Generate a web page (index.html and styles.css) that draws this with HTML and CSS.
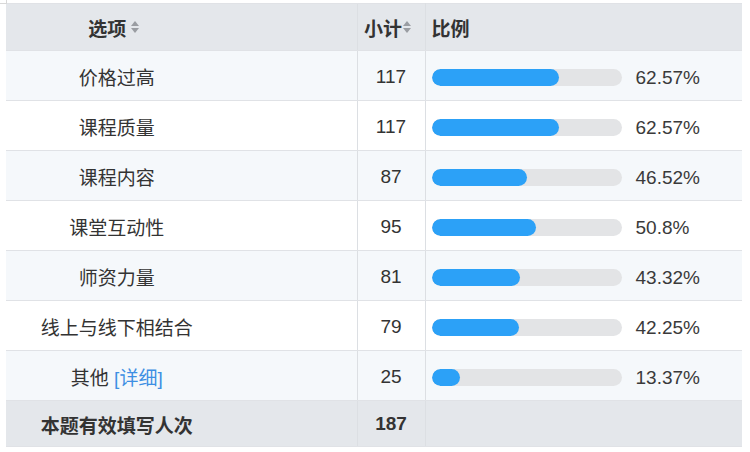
FILE: index.html
```html
<!DOCTYPE html>
<html lang="zh-CN">
<head>
<meta charset="utf-8">
<link rel="stylesheet" href="styles.css">
</head>
<body>
<div class="frame">
<table class="stat">
  <thead>
    <tr>
      <th class="c-opt"><span class="sortable">选项<i class="sort sort-opt"></i></span></th>
      <th class="c-num"><span class="sortable">小计<i class="sort sort-num"></i></span></th>
      <th class="c-pct">比例</th>
    </tr>
  </thead>
  <tbody>
    <tr class="odd"><td class="c-opt">价格过高</td><td class="c-num">117</td><td class="c-pct"><div class="pct"><div class="track"><div class="fill" style="width:127px"></div></div><span class="val">62.57%</span></div></td></tr>
    <tr><td class="c-opt">课程质量</td><td class="c-num">117</td><td class="c-pct"><div class="pct"><div class="track"><div class="fill" style="width:127px"></div></div><span class="val">62.57%</span></div></td></tr>
    <tr class="odd"><td class="c-opt">课程内容</td><td class="c-num">87</td><td class="c-pct"><div class="pct"><div class="track"><div class="fill" style="width:95px"></div></div><span class="val">46.52%</span></div></td></tr>
    <tr><td class="c-opt">课堂互动性</td><td class="c-num">95</td><td class="c-pct"><div class="pct"><div class="track"><div class="fill" style="width:104px"></div></div><span class="val">50.8%</span></div></td></tr>
    <tr class="odd"><td class="c-opt">师资力量</td><td class="c-num">81</td><td class="c-pct"><div class="pct"><div class="track"><div class="fill" style="width:88px"></div></div><span class="val">43.32%</span></div></td></tr>
    <tr><td class="c-opt">线上与线下相结合</td><td class="c-num">79</td><td class="c-pct"><div class="pct"><div class="track"><div class="fill" style="width:87px"></div></div><span class="val">42.25%</span></div></td></tr>
    <tr class="odd"><td class="c-opt">其他 <a class="detail" href="#">[详细]</a></td><td class="c-num">25</td><td class="c-pct"><div class="pct"><div class="track"><div class="fill" style="width:28px"></div></div><span class="val">13.37%</span></div></td></tr>
  </tbody>
  <tfoot>
    <tr><td class="c-opt">本题有效填写人次</td><td class="c-num">187</td><td class="c-pct"></td></tr>
  </tfoot>
</table>
</div>
</body>
</html>
```
FILE: styles.css
```css
html, body {
  margin: 0;
  padding: 0;
  background: #ffffff;
}
body {
  font-family: "Liberation Sans", "Noto Sans CJK SC", sans-serif;
  font-size: 19px;
  color: #333333;
}
.frame {
  position: relative;
  padding: 3px 0 0 6px;
  width: 736px;
}
.frame::before {
  content: "";
  position: absolute;
  left: 0;
  top: 0;
  width: 7px;
  height: 4px;
  border-right: 1px solid #d8d8d8;
  border-bottom: 1px solid #d8d8d8;
  box-sizing: border-box;
}
.stat {
  width: 736px;
  border-collapse: collapse;
  table-layout: fixed;
}
.stat th, .stat td {
  padding: 0;
  border-top: 1px solid #e0e2e6;
  border-bottom: 1px solid #e0e2e6;
  vertical-align: middle;
}
.stat .c-opt { width: 351px; text-align: center; padding-right: 129px; box-sizing: border-box; }
.stat .c-num { width: 67px; text-align: center; border-left: 1px solid #dcdfe3; border-right: 1px solid #dcdfe3; }
.stat .c-pct { text-align: left; padding-left: 6px; }
.stat thead th {
  background: #e4e7eb;
  height: 46px;
  font-weight: bold;
  color: #333333;
}
.stat tbody td {
  height: 47px;
  padding-top: 2px;
  background: #ffffff;
}
.stat tbody td.c-pct { padding-left: 6px; }
.stat tbody tr.odd td { background: #f5f8fb; }
.stat tfoot td {
  height: 44px;
  padding-top: 1px;
  background: #e4e7eb;
  font-weight: bold;
}
.sortable {
  display: inline-flex;
  align-items: center;
}
.sort {
  display: inline-block;
  position: relative;
  width: 8px;
  height: 12px;
}
.sort-opt { margin-left: 5px; margin-right: 6px; }
.sort-num { margin-left: 1px; margin-right: 7px; }
.sort::before, .sort::after {
  content: "";
  position: absolute;
  left: 0;
  border-left: 4px solid transparent;
  border-right: 4px solid transparent;
}
.sort::before { top: 0; border-bottom: 5px solid #9a9da2; }
.sort::after { bottom: 0; border-top: 5px solid #9a9da2; }
.pct {
  display: flex;
  align-items: center;
}
.track {
  width: 190px;
  height: 17px;
  border-radius: 9px;
  background: #e3e4e6;
  overflow: hidden;
  margin-top: 2px;
}
.fill {
  height: 100%;
  border-radius: 9px;
  background: #2ca1f7;
}
.val {
  margin-left: 14px;
  color: #3a3a3a;
  margin-top: 3px;
}
.detail {
  color: #3d8fe3;
  text-decoration: none;
}
```
